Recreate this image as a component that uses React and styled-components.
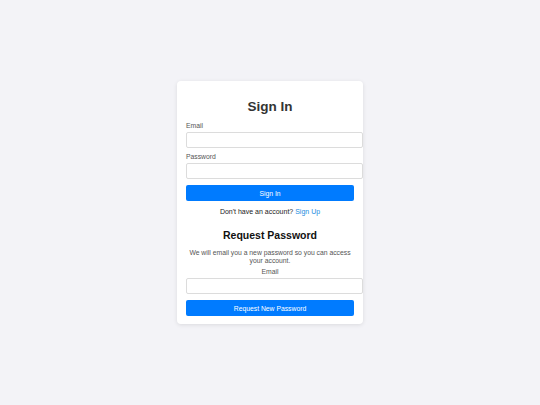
import React from "react";
import styled, { createGlobalStyle } from "styled-components";

const GlobalStyle = createGlobalStyle`
  * { box-sizing: border-box; }
  html, body {
    margin: 0;
    padding: 0;
    background: #f3f3f7;
    font-family: "Liberation Sans", Arial, sans-serif;
  }
`;

const Page = styled.div`
  min-height: 100vh;
  display: flex;
  justify-content: center;
  align-items: center;
`;

const Card = styled.div`
  width: 186px;
  padding: 9px 9px 8px;
  background: #ffffff;
  border-radius: 4px;
  box-shadow: 0 1px 4px rgba(0, 0, 0, 0.1);
  display: flex;
  flex-direction: column;
`;

const Title = styled.h2`
  margin: 9px 0 8px;
  font-size: 13.5px;
  line-height: 15px;
  font-weight: 700;
  text-align: center;
  color: #333;
`;

const SubTitle = styled.h3`
  margin: 13px 0 8px;
  font-size: 10.5px;
  line-height: 12px;
  font-weight: 700;
  text-align: center;
  color: #111;
`;

const Field = styled.div`
  display: flex;
  flex-direction: column;
  align-items: ${(p) => (p.$center ? "center" : "flex-start")};
  margin-bottom: ${(p) => p.$gap || 0}px;
`;

const Label = styled.label`
  display: block;
  font-size: 6.8px;
  line-height: 8px;
  color: #555;
  margin-bottom: 2px;
`;

const Input = styled.input`
  display: block;
  align-self: flex-start;
  width: calc(100% + 9px);
  height: 16px;
  padding: 0 4px;
  border: 1px solid #dcdcdc;
  border-radius: 2px;
  background: #fff;
  font-size: 7px;
  font-family: inherit;
  outline: none;
`;

const Button = styled.button`
  display: block;
  width: 100%;
  height: 16px;
  margin-top: 6px;
  padding: 0;
  border: none;
  border-radius: 2px;
  background: #007bff;
  color: #fff;
  font-family: inherit;
  font-size: 6.8px;
  cursor: pointer;
`;

const Note = styled.p`
  margin: 7px 0 0;
  font-size: 7px;
  line-height: 8px;
  text-align: center;
  color: #222;

  a {
    color: #1a8be0;
    text-decoration: none;
  }
`;

const Description = styled.p`
  margin: 0 auto 3px;
  width: 166px;
  font-size: 6.8px;
  line-height: 8px;
  text-align: center;
  color: #555;
`;

export default function App() {
  return (
    <>
      <GlobalStyle />
      <Page>
        <Card>
          <Title>Sign In</Title>
          <Field $gap={5}>
            <Label>Email</Label>
            <Input type="email" />
          </Field>
          <Field>
            <Label>Password</Label>
            <Input type="password" />
          </Field>
          <Button>Sign In</Button>
          <Note>
            Don't have an account? <a href="#">Sign Up</a>
          </Note>

          <SubTitle>Request Password</SubTitle>
          <Description>
            We will email you a new password so you can access your account.
          </Description>
          <Field $center>
            <Label>Email</Label>
            <Input type="email" />
          </Field>
          <Button>Request New Password</Button>
        </Card>
      </Page>
    </>
  );
}
